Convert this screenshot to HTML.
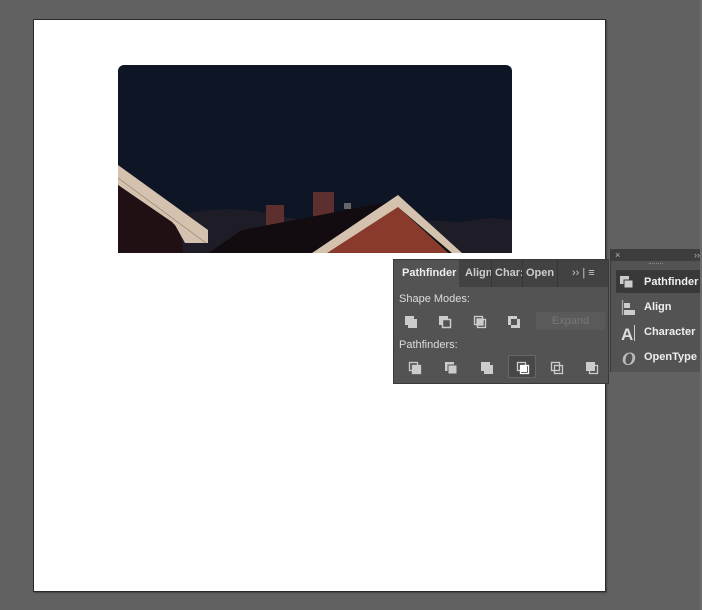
<!DOCTYPE html>
<html><head><style>
body{margin:0;width:702px;height:610px;background:#616161;position:relative;overflow:hidden;font-family:"Liberation Sans",sans-serif;}
.ab{position:absolute;left:33px;top:19px;width:571px;height:571px;background:#fff;border:1px solid #2a2a2a;box-shadow:1px 1px 1px #444;}
.p{position:absolute;left:393px;top:259px;width:216px;height:125px;background:#535353;border:1px solid #3a3a3a;box-sizing:border-box;color:#ddd;font-size:11px;}
.tabs{height:27px;background:#424242;position:relative;}
.tab{position:absolute;top:0;height:27px;line-height:27px;font-size:11px;color:#ccc;font-weight:bold;}
.r{position:absolute;left:610px;top:249px;width:92px;height:123px;background:#535353;border-left:1px solid #3a3a3a;color:#eee;font-size:11px;font-weight:bold;}
.r div.it{position:absolute;left:33px;}
</style></head><body>
<div class="ab"></div>
<svg style="position:absolute;left:0;top:0" width="702" height="610">
<defs><clipPath id="c"><path d="M118 253V71a6 6 0 0 1 6-6H506a6 6 0 0 1 6 6V253Z"/></clipPath></defs>
<g clip-path="url(#c)">
<rect x="118" y="65" width="394" height="188" fill="#0e1524"/>
<path d="M180 215Q220 205 260 212L300 220 340 215 380 210 420 220 460 222 490 218 512 220V253H180Z" fill="#1e1d27"/>
<rect x="266" y="205" width="18" height="23" fill="#5e2f2f"/>
<rect x="313" y="192" width="21" height="25" fill="#5e2f2f"/>
<rect x="344" y="203" width="7" height="6" fill="#666"/>
<path d="M208 253L242 230 398 200 420 253Z" fill="#120c10"/>
<path d="M312 253L398 195 462 253Z" fill="#d4c2ae"/>
<path d="M327 253L398 207 448 253Z" fill="#8a3a2c"/>
<path d="M398 207L448 253 452 253Z" fill="#111"/>
<path d="M118 165L208 230V243H185L175 225 118 185Z" fill="#d4c2ae"/>
<line x1="118" y1="178" x2="206" y2="243" stroke="#8a7e72" stroke-width="0.6"/>
<path d="M118 185L172 222Q182 232 183 253H118Z" fill="#200f13"/>
</g>
</svg>
<div class="p">
<div class="tabs">
<div style="position:absolute;left:0;top:0;width:65px;height:27px;background:#535353"></div>
<div class="tab" style="left:8px;color:#eee">Pathfinder</div>
<div class="tab" style="left:71px">Align</div>
<div class="tab" style="left:101px">Char:</div>
<div class="tab" style="left:132px">Open</div>
<div class="tab" style="left:178px;font-weight:normal">›› | ≡</div>
<div style="position:absolute;left:97px;top:0;width:1px;height:27px;background:#353535"></div>
<div style="position:absolute;left:128px;top:0;width:1px;height:27px;background:#353535"></div>
<div style="position:absolute;left:163px;top:0;width:1px;height:27px;background:#353535"></div>
</div>
<div style="position:absolute;left:5px;top:33px">Shape Modes:</div>
<div style="position:absolute;left:5px;top:79px">Pathfinders:</div>
<div style="position:absolute;left:142px;top:52px;width:69px;height:18px;background:#5a5a5a;color:#777;text-align:center;line-height:18px;">Expand</div>
<div style="position:absolute;left:114px;top:95px;width:28px;height:23px;background:#474747;border:1px solid #666;border-radius:2px;box-sizing:border-box"></div>
<svg style="position:absolute;left:0;top:0" width="216" height="125" fill="none">
<g fill="#ccc"><rect x="11" y="56" width="9" height="9"/><rect x="14" y="59" width="9" height="9"/></g>
<g><rect x="45" y="56" width="9" height="9" fill="#ccc"/><rect x="48.5" y="59.5" width="8" height="8" fill="#535353" stroke="#ccc" stroke-width="1.5"/></g>
<g stroke="#ccc" stroke-width="1.3"><rect x="80.5" y="56.5" width="8" height="8"/><rect x="83.5" y="59.5" width="8" height="8"/><rect x="83" y="59" width="6" height="6" fill="#ccc"/></g>
<g><rect x="114" y="56" width="9" height="9" fill="#ccc"/><rect x="117" y="59" width="9" height="9" fill="#ccc"/><rect x="117" y="59" width="6" height="6" fill="#535353"/></g>
<g stroke="#ccc" stroke-width="1.3"><rect x="15.5" y="102.5" width="8" height="8"/><rect x="18.5" y="105.5" width="8" height="8" fill="#ccc"/></g>
<g><rect x="51" y="102" width="9" height="9" fill="#ccc"/><rect x="54" y="105" width="9" height="9" fill="#ccc" stroke="#535353"/></g>
<g fill="#ccc"><rect x="87" y="102" width="9" height="9"/><rect x="90" y="105" width="9" height="9"/></g>
<g><rect x="123.5" y="102.5" width="8" height="8" stroke="#ccc" stroke-width="1.3"/><rect x="126" y="105" width="7" height="7" fill="#fff"/><rect x="126.5" y="105.5" width="8" height="8" stroke="#fff" stroke-width="1.3"/></g>
<g stroke="#ccc" stroke-width="1.3"><rect x="157.5" y="102.5" width="8" height="8"/><rect x="160.5" y="105.5" width="8" height="8"/></g>
<g><rect x="192" y="102" width="9" height="9" fill="#ccc"/><rect x="195.5" y="105.5" width="8" height="8" stroke="#ccc" stroke-width="1.3"/></g>
</svg>
</div>
<div class="r">
<div style="position:absolute;left:0;top:0;width:92px;height:12px;background:#3d3d3d;color:#bbb;font-size:9px;font-weight:normal;line-height:12px"><span style="margin-left:4px">×</span><span style="position:absolute;right:3px">››</span></div>
<div style="position:absolute;left:38px;top:14px;width:14px;height:2px;border-top:1px dotted #888"></div>
<div style="position:absolute;left:5px;top:21px;width:87px;height:23px;background:#393939;border-radius:2px"></div>
<svg style="position:absolute;left:0;top:0" width="30" height="123">
<rect x="9" y="27" width="9" height="8" fill="#ccc"/><rect x="13" y="31" width="9" height="8" fill="#ccc" stroke="#393939"/>
<line x1="11.5" y1="51" x2="11.5" y2="66" stroke="#aaa" stroke-width="1.3"/><rect x="13" y="54" width="6" height="5" fill="#ccc"/><rect x="13" y="61" width="11" height="5" fill="#ccc"/>
<text x="10" y="91" fill="#ddd" font-size="17" font-family="Liberation Sans">A</text><line x1="23.5" y1="76" x2="23.5" y2="92" stroke="#ccc"/>
<text x="11" y="116" fill="#bbb" font-size="19" font-style="italic" font-family="Liberation Serif">O</text>
</svg>
<div class="it" style="top:27px">Pathfinder</div>
<div class="it" style="top:52px">Align</div>
<div class="it" style="top:77px">Character</div>
<div class="it" style="top:102px">OpenType</div>
</div>
<div style="position:absolute;left:700px;top:0;width:2px;height:610px;background:#6c6c6c"></div>
</body></html>
